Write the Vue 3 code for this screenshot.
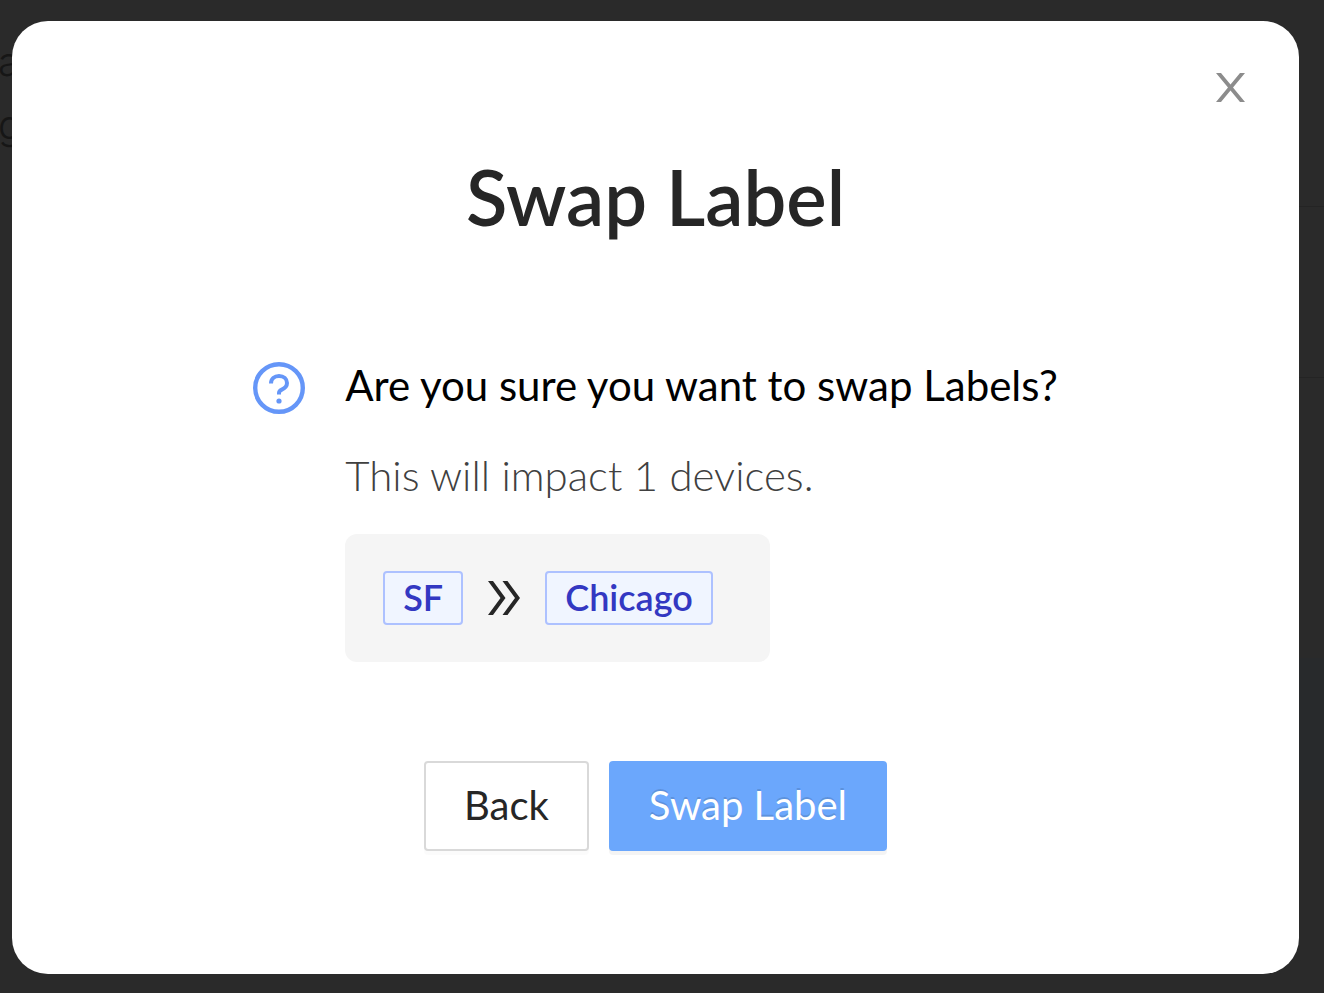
<script setup>
import { ref } from 'vue'

const deviceCount = ref(1)
const fromLabel = ref('SF')
const toLabel = ref('Chicago')
</script>

<template>
  <div class="page">
    <div class="backdrop" aria-hidden="true">
      <div class="behind">
        <span>a</span>
        <span>g</span>
      </div>
      <div class="side">
        <div class="side-row"></div>
        <div class="side-cell"></div>
      </div>
    </div>

    <section class="dialog" role="dialog" aria-modal="true" aria-labelledby="dialog-title">
      <button class="close" type="button" aria-label="Close">
        <svg width="30" height="30" viewBox="0 0 30 30" fill="currentColor">
          <path d="M0 0H5L14.5 11.5L24 0H29L17 14.5L29 29H24L14.5 17.5L5 29H0L12 14.5Z" />
        </svg>
      </button>

      <h1 id="dialog-title" class="title">Swap Label</h1>

      <div class="content">
        <svg class="question" width="52" height="52" viewBox="0 0 52 52" fill="none" stroke="currentColor">
          <circle cx="26" cy="26" r="23.8" stroke-width="4.4" />
          <path
            d="M18 21.5C18 16.8 21.4 14 26 14C30.8 14 34 17 34 21C34 24.6 31.4 26.4 28.8 27.6C27 28.5 26 29.4 26 31V32.5"
            stroke-width="4"
          />
          <circle cx="26" cy="39" r="2.6" fill="currentColor" stroke="none" />
        </svg>
        <div class="body">
          <h2 class="ask">Are you sure you want to swap Labels?</h2>
          <p class="impact">This will impact {{ deviceCount }} devices.</p>
          <div class="swap">
            <span class="tag">{{ fromLabel }}</span>
            <svg width="32" height="34" viewBox="0 0 32 34" fill="#262626">
              <path d="M0 0H5L17.5 17L5 34H0L12.5 17Z" />
              <path d="M14.5 0H19.5L32 17L19.5 34H14.5L27 17Z" />
            </svg>
            <span class="tag">{{ toLabel }}</span>
          </div>
        </div>
      </div>

      <footer class="actions">
        <button class="btn" type="button">Back</button>
        <button class="btn primary" type="button">Swap Label</button>
      </footer>
    </section>
  </div>
</template>

<style>
body {
  margin: 0;
  background: #2a2a2a;
}
</style>

<style scoped>
.page {
  position: relative;
  box-sizing: border-box;
  min-height: 100vh;
  padding: 21px 25px 19px 12px;
  display: flex;
  overflow: hidden;
  background: #2a2a2a;
  font-family: Lato, "Open Sans", sans-serif;
}

.backdrop {
  position: absolute;
  inset: 0;
}

.behind {
  position: absolute;
  top: 30px;
  left: -2px;
  display: flex;
  flex-direction: column;
  font-family: Inter, sans-serif;
  font-size: 40px;
  font-weight: 300;
  line-height: 63px;
  color: #161616;
}

.side {
  position: absolute;
  top: 206px;
  right: 0;
  width: 25px;
}

.side-row {
  height: 170px;
  border-top: 1px solid #242424;
  border-bottom: 1px solid #242424;
}

.side-cell {
  margin-top: 280px;
  height: 142px;
  background: #282a2c;
}

.dialog {
  position: relative;
  flex: 1;
  box-sizing: border-box;
  padding: 132px 24px 123px;
  display: flex;
  flex-direction: column;
  align-items: center;
  border-radius: 36px;
  background: #fff;
}

.close {
  position: absolute;
  top: 40px;
  right: 41px;
  padding: 12px;
  border: 0;
  background: none;
  color: #8c8c8c;
  cursor: pointer;
}

.close svg {
  display: block;
}

.title {
  margin: 0;
  font-size: 76px;
  font-weight: 600;
  line-height: 88px;
  color: #262626;
}

.content {
  margin-top: 112px;
  display: flex;
  align-items: flex-start;
  gap: 40px;
}

.question {
  flex: none;
  margin-top: 9px;
  color: #6596f8;
}

.body {
  display: flex;
  flex-direction: column;
  align-items: flex-start;
}

.ask {
  margin: 0;
  font-size: 42px;
  font-weight: 400;
  line-height: 64px;
  color: #000;
}

.impact {
  margin: 26px 0 0;
  font-size: 42px;
  font-weight: 300;
  line-height: 64px;
  color: #404040;
}

.swap {
  margin-top: 27px;
  padding: 37px 57px 37px 38px;
  display: flex;
  align-items: center;
  gap: 25px;
  border-radius: 12px;
  background: #f5f5f5;
}

.tag {
  padding: 0 18px 2px;
  border: 2px solid #adc1ff;
  border-radius: 4px;
  background: #f0f5ff;
  font-size: 36px;
  font-weight: 600;
  line-height: 48px;
  color: #3338c2;
}

.actions {
  margin-top: 99px;
  display: flex;
  gap: 20px;
}

.btn {
  box-sizing: border-box;
  height: 90px;
  padding: 0 38px 2px;
  border: 2px solid #d9d9d9;
  border-radius: 4px;
  background: #fff;
  box-shadow: 0 4px 0 rgba(0, 0, 0, 0.016);
  font-family: inherit;
  font-size: 40px;
  line-height: 60px;
  color: #262626;
  cursor: pointer;
}

.btn.primary {
  border-color: #6ba7fc;
  background: #6ba7fc;
  box-shadow: 0 4px 0 rgba(0, 0, 0, 0.044);
  text-shadow: 0 -2px 0 rgba(0, 0, 0, 0.12);
  color: #fff;
}
</style>
